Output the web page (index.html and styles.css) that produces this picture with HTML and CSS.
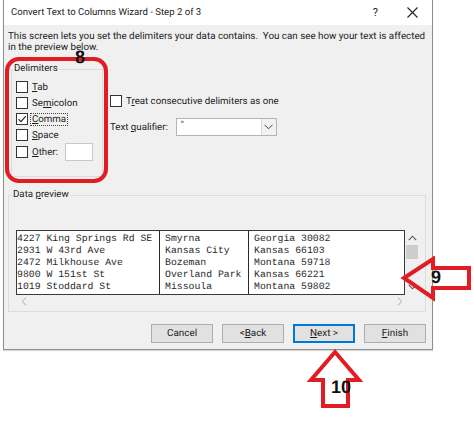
FILE: index.html
```html
<!DOCTYPE html>
<html>
<head>
<meta charset="utf-8">
<link rel="stylesheet" href="styles.css">
</head>
<body>
<div class="page">
  <div class="dialog">
    <div class="titlebar">
      <span class="title">Convert Text to Columns Wizard - Step 2 of 3</span>
      <span class="help">?</span>
      <svg class="close" width="11" height="11" viewBox="0 0 11 11"><path d="M0.5 0.5L10.5 10.5M10.5 0.5L0.5 10.5" stroke="#222" stroke-width="1.1" fill="none"/></svg>
    </div>
    <div class="content">
      <p class="desc">This screen lets you set the delimiters your data contains.&nbsp; You can see how your text is affected<br>in the preview below.</p>
      <div class="options">
        <fieldset class="group delims">
          <legend>Delimiters</legend>
          <div class="chk"><span class="box"></span><span><u>T</u>ab</span></div>
          <div class="chk"><span class="box"></span><span>Se<u>m</u>icolon</span></div>
          <div class="chk"><span class="box"><svg width="10" height="10" viewBox="0 0 10 10"><path d="M1.5 5.2L4 7.6L8.8 2.2" stroke="#222" stroke-width="1.1" fill="none"/></svg></span><span class="focus"><u>C</u>omma</span></div>
          <div class="chk"><span class="box"></span><span><u>S</u>pace</span></div>
          <div class="chk other"><span class="box"></span><span><u>O</u>ther:</span><span class="input"></span></div>
        </fieldset>
        <div class="side">
          <div class="chk"><span class="box"></span><span>T<u>r</u>eat consecutive delimiters as one</span></div>
          <div class="qual">
            <span>Text <u>q</u>ualifier:</span>
            <div class="select"><span class="val">"</span><span class="dd"><svg width="9" height="6" viewBox="0 0 9 6"><path d="M0.5 0.8L4.5 4.8L8.5 0.8" stroke="#444" stroke-width="1" fill="none"/></svg></span></div>
          </div>
        </div>
      </div>
      <fieldset class="group preview">
        <legend>Data <u>p</u>review</legend>
        <div class="scrollwrap">
          <div class="data">
            <div class="col c1">4227 King Springs Rd SE<br>2931 W 43rd Ave<br>2472 Milkhouse Ave<br>9800 W 151st St<br>1019 Stoddard St</div>
            <div class="col c2">Smyrna<br>Kansas City<br>Bozeman<br>Overland Park<br>Missoula</div>
            <div class="col c3">Georgia 30082<br>Kansas 66103<br>Montana 59718<br>Kansas 66221<br>Montana 59802</div>
          </div>
          <div class="vscroll">
            <svg width="9" height="6" viewBox="0 0 9 6"><path d="M0.8 5.2L4.5 1.2L8.2 5.2" stroke="#555" stroke-width="1.1" fill="none"/></svg>
            <span class="thumb"></span>
            <svg class="down" width="9" height="6" viewBox="0 0 9 6"><path d="M0.8 0.8L4.5 4.8L8.2 0.8" stroke="#555" stroke-width="1.1" fill="none"/></svg>
          </div>
          <div class="hscroll">
            <svg width="6" height="9" viewBox="0 0 6 9"><path d="M5 0.8L1.2 4.5L5 8.2" stroke="#a8a8a8" stroke-width="1" fill="none"/></svg>
            <svg width="6" height="9" viewBox="0 0 6 9"><path d="M1 0.8L4.8 4.5L1 8.2" stroke="#a8a8a8" stroke-width="1" fill="none"/></svg>
          </div>
          <div class="corner"></div>
        </div>
      </fieldset>
      <div class="buttons">
        <span class="btn">Cancel</span>
        <span class="btn">&lt; <u>B</u>ack</span>
        <span class="btn default"><u>N</u>ext &gt;</span>
        <span class="btn"><u>F</u>inish</span>
      </div>
    </div>
  </div>

  <div class="mark-rect"></div>
  <span class="num n8">8</span>
  <svg class="arrow a9" width="74" height="46" viewBox="400 256 74 46"><polygon points="404,278 433,259 433,268 469,268 469,288 433,288 433,298" fill="none" stroke="#e31b23" stroke-width="4" stroke-linejoin="miter"/></svg>
  <span class="num n9">9</span>
  <svg class="arrow a10" width="60" height="62" viewBox="306 348 60 62"><polygon points="335,352 359,380 348,380 348,406 323,406 323,380 311,380" fill="none" stroke="#e31b23" stroke-width="4"/></svg>
  <span class="num n10">10</span>
</div>
</body>
</html>
```

FILE: styles.css
```css
* { box-sizing: border-box; }
body {
  margin: 0;
  background: #fff;
  font-family: Roboto, "Open Sans", sans-serif;
  color: #1c1c1c;
  text-rendering: geometricPrecision;
}
.page {
  position: relative;
  width: 474px;
  height: 421px;
  overflow: hidden;
}
.dialog {
  margin-left: 3px;
  width: 430px;
  border: 1px solid #8f8f8f;
  border-top: none;
  background: #f0f0f0;
  box-shadow: 0 1px 1px rgba(0,0,0,0.15);
}
.titlebar {
  height: 25px;
  background: #fff;
  display: flex;
  align-items: center;
}
.title {
  margin-left: 7px;
  font-size: 9.6px;
  flex: 1;
}
.help {
  font-size: 11px;
  margin-right: 29px;
}
.close {
  margin-right: 14px;
}
.content {
  padding: 6px 4px 6px 4px;
}
.desc {
  margin: 0;
  font-size: 9.8px;
  line-height: 11px;
  white-space: nowrap;
}
.options {
  display: flex;
  align-items: flex-start;
}
.group {
  border: 1px solid #dcdcdc;
  margin: 0;
  padding: 0;
  min-width: 0;
}
.group legend {
  font-size: 9.7px;
  line-height: 12px;
  padding: 0 1px;
}
.delims {
  margin: 10px 0 0 3px;
  width: 92px;
  padding: 4px 0 15px 4px;
}
.delims legend { margin-left: -3px; }
.chk {
  display: flex;
  align-items: center;
  height: 16px;
  font-size: 9.7px;
  white-space: nowrap;
}
.box {
  width: 12px;
  height: 12px;
  border: 1px solid #333;
  background: #fff;
  margin-right: 4px;
  display: flex;
  align-items: center;
  justify-content: center;
  flex: none;
}
.focus {
  outline: 1px dotted #444;
  outline-offset: 0;
  padding: 0 1px;
  margin-left: -1px;
}
.other { height: 18px; }
.input {
  width: 28px;
  height: 18px;
  border: 1px solid #c9c9c9;
  background: #fff;
  margin-left: 7px;
}
.side {
  margin-left: 7px;
  padding-top: 40px;
}
.qual {
  display: flex;
  align-items: center;
  margin-top: 9px;
  font-size: 9.7px;
}
.select {
  margin-left: 8px;
  width: 101px;
  height: 18px;
  border: 1px solid #b4b4b4;
  background: #fff;
  display: flex;
}
.select .val {
  flex: 1;
  padding-left: 4px;
  line-height: 14px;
  color: #333;
}
.select .dd {
  width: 15px;
  border-left: 1px solid #d8d8d8;
  background: #f2f2f2;
  display: flex;
  align-items: center;
  justify-content: center;
}
.preview {
  margin: 12px 0 0 0;
  width: 418px;
  padding: 29px 0 3px 7px;
}
.preview legend { margin-left: -4px; }
.scrollwrap {
  display: grid;
  grid-template-columns: 389px 14px;
  grid-template-rows: 65px 13px;
}
.data {
  border: 1px solid #3a3a3a;
  border-right: none;
  background: #fff;
  display: flex;
  padding-top: 2px;
  font-family: "Liberation Mono", "DejaVu Sans Mono", monospace;
  font-size: 9.8px;
  line-height: 12px;
  color: #2a2a2a;
  white-space: nowrap;
  overflow: hidden;
}
.col { margin-top: -2px; padding-top: 2px; border-right: 1px solid #2a2a2a; }
.c1 { width: 143px; padding-left: 0; }
.c2 { width: 89px; padding-left: 5px; }
.c3 { flex: 1; padding-left: 5px; border-right: 1px solid #3a3a3a; }
.vscroll {
  background: #f0f0f0;
  display: flex;
  flex-direction: column;
  align-items: center;
  padding-top: 5px;
}
.thumb {
  width: 12px;
  height: 14px;
  background: #cdcdcd;
  margin-top: 4px;
}
.vscroll .down { margin-top: 25px; }
.hscroll {
  background: #f0f0f0;
  display: flex;
  justify-content: space-between;
  align-items: center;
  padding: 0 2px 0 5px;
}
.corner { background: #f0f0f0; }
.buttons {
  display: flex;
  justify-content: flex-end;
  gap: 9px;
  margin-top: 12px;
  padding-right: 2px;
}
.btn {
  width: 62px;
  height: 19px;
  background: #e1e1e1;
  border: 1px solid #adadad;
  font-size: 9.9px;
  display: flex;
  align-items: center;
  justify-content: center;
}
.btn.default {
  border-color: #0078d7;
  box-shadow: inset 0 0 0 1px #0078d7;
}
.mark-rect {
  position: absolute;
  left: 5px;
  top: 57px;
  width: 103px;
  height: 126px;
  border: 4px solid #e31b23;
  border-radius: 14px;
}
.num {
  position: absolute;
  font-family: "Liberation Sans", Arial, sans-serif;
  font-weight: bold;
  font-size: 18px;
  line-height: 18px;
  color: #111;
}
.n8 { left: 75px; top: 48px; }
.n9 { left: 431px; top: 268px; }
.n10 { left: 331px; top: 378px; }
.arrow { position: absolute; }
.a9 { left: 400px; top: 256px; }
.a10 { left: 306px; top: 348px; }
```
